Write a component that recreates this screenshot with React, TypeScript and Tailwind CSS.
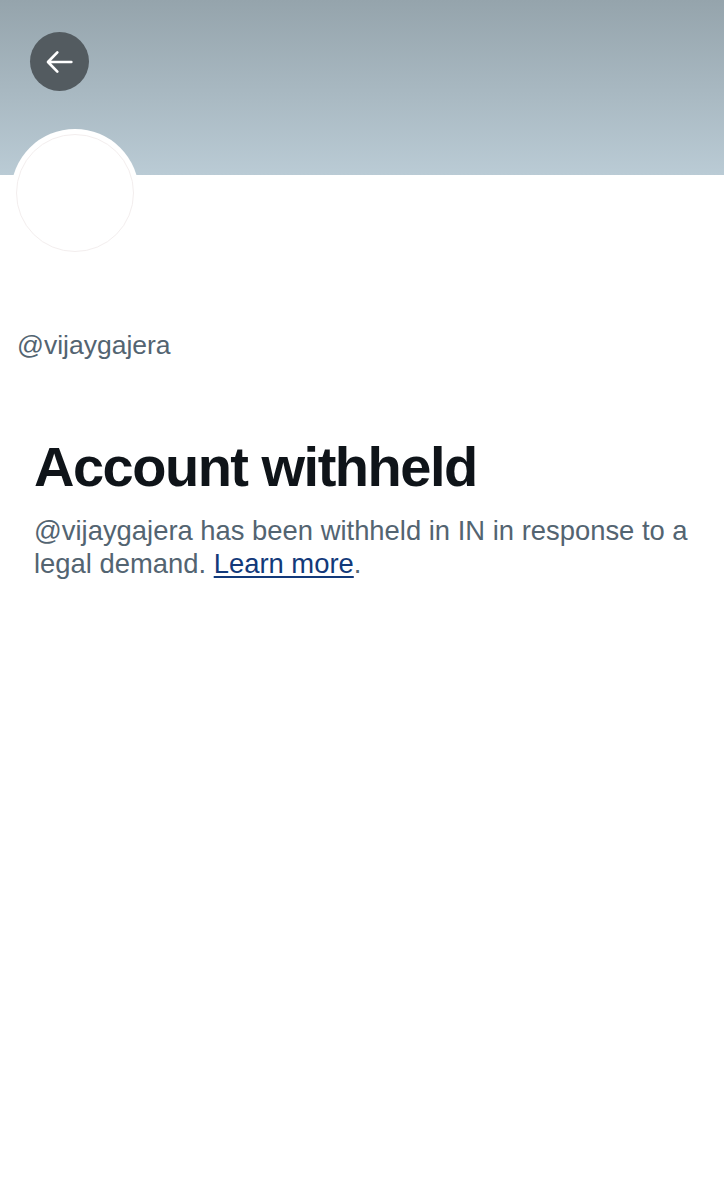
export default function App() {
  return (
    <div className="min-h-[1199px] w-full bg-white font-['Liberation_Sans',Arial,sans-serif]">
      {/* Banner */}
      <div className="relative h-[175px] w-full bg-gradient-to-b from-[#95a4ac] to-[#bacbd5]">
        <div className="px-[30px] pt-[32px]">
          <button className="flex h-[59px] w-[59px] items-center justify-center rounded-full bg-[#535b60]">
            <svg width="32" height="32" viewBox="0 0 24 24" fill="none">
              <path
                d="M20.5 12H3.5M10 4.8L3 12l7 7.2"
                stroke="white"
                strokeWidth="2"
                strokeLinecap="round"
                strokeLinejoin="round"
              />
            </svg>
          </button>
        </div>
        {/* Avatar */}
        <div className="absolute left-[11px] top-[129px] flex h-[128px] w-[128px] items-center justify-center rounded-full bg-white">
          <div className="h-[118px] w-[118px] rounded-full border border-[#f3eeee] bg-white" />
        </div>
      </div>

      <div className="pt-[155px] pl-[17px] text-[26.5px] leading-[30px] text-[#536471]">
        @vijaygajera
      </div>

      <div className="px-[34px] pt-[76px]">
        <h1 className="text-[56px] font-bold leading-[62px] tracking-[-1.5px] text-[#0f1419]">
          Account withheld
        </h1>
        <p className="mt-[16px] text-[27.4px] leading-[33px] text-[#536471]">
          @vijaygajera has been withheld in IN in response to a legal demand.{" "}
          <a href="#" className="text-[#12397a] underline underline-offset-[3px] decoration-[2px]">
            Learn more
          </a>
          .
        </p>
      </div>
    </div>
  );
}
